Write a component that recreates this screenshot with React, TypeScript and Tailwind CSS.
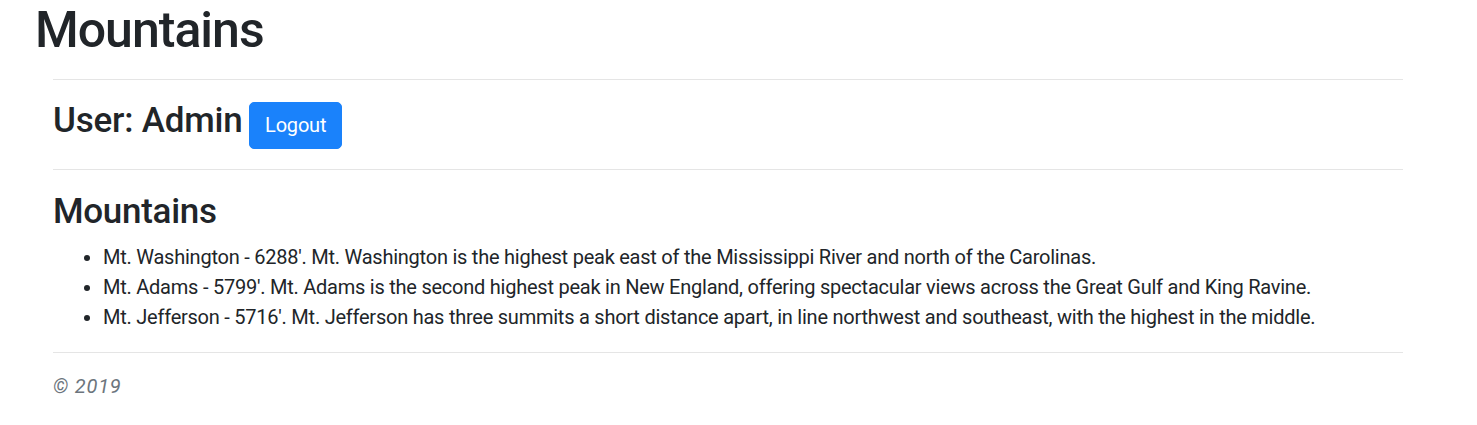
const mountains = [
  {
    name: 'Mt. Washington',
    height: 6288,
    text: 'Mt. Washington is the highest peak east of the Mississippi River and north of the Carolinas.',
  },
  {
    name: 'Mt. Adams',
    height: 5799,
    text: 'Mt. Adams is the second highest peak in New England, offering spectacular views across the Great Gulf and King Ravine.',
  },
  {
    name: 'Mt. Jefferson',
    height: 5716,
    text: 'Mt. Jefferson has three summits a short distance apart, in line northwest and southeast, with the highest in the middle.',
  },
]

export default function App() {
  return (
    <div className="min-h-[425px] bg-white text-[#212529] font-['Roboto','Liberation_Sans',sans-serif]">
      <h1 className="pl-[35px] text-[50px] font-medium leading-[60px] tracking-[-1px]">Mountains</h1>

      <div className="ml-[53px] w-[1350px]">
        <hr className="mt-[19px] border-[#e5e5e5]" />

        {/* user bar */}
        <h3 className="mt-[20px] text-[35px] font-medium leading-[42px] tracking-[-0.2px]">
          User: Admin{' '}
          <button className="ml-[-2px] rounded-[5px] border border-[#1a82fb] bg-[#1a82fb] px-[15px] py-[7.5px] align-baseline text-[20px] leading-[30px] font-normal tracking-[-0.2px] text-white">
            Logout
          </button>
        </h3>

        <hr className="mt-[20px] border-[#e5e5e5]" />

        <h2 className="mt-[21px] text-[35px] font-medium leading-[42px] tracking-[-0.3px]">Mountains</h2>
        <ul className="mt-[9px] list-disc pl-[50px] text-[20px] leading-[30px] tracking-[-0.24px]">
          {mountains.map((m) => (
            <li key={m.name}>
              {m.name} - {m.height}'. {m.text}
            </li>
          ))}
        </ul>

        <hr className="mt-[20px] border-[#e5e5e5]" />

        <footer className="mt-[18px] text-[20px] italic leading-[30px] tracking-[0.8px] text-[#6c757d]">© 2019</footer>
      </div>
    </div>
  )
}
